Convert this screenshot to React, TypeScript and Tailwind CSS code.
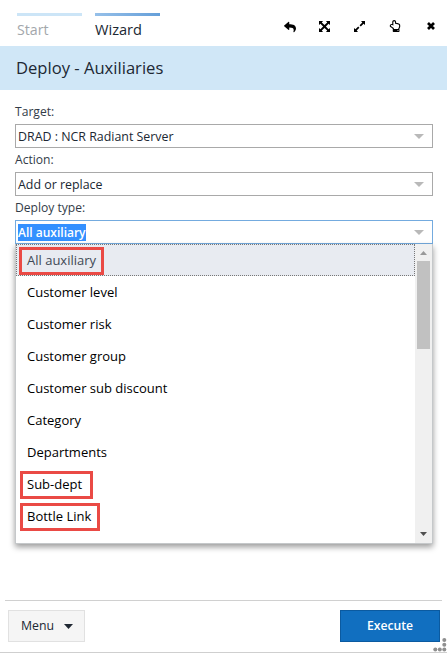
import type { ReactNode } from "react";
import { FaReply, FaRegHandPointUp } from "react-icons/fa";

function Triangle({ className, up = false }: { className: string; up?: boolean }) {
  return (
    <svg className={className} viewBox="0 0 10 5" preserveAspectRatio="none" fill="currentColor">
      <path d={up ? "M0 5h10L5 0z" : "M0 0h10L5 5z"} />
    </svg>
  );
}

function Field({ label, active = false, children }: { label: string; active?: boolean; children: ReactNode }) {
  return (
    <div>
      <div className="h-6 text-[12.1px] leading-6 text-[#333c48]">{label}</div>
      <div
        className={`flex h-6 items-center justify-between border pl-0.5 pr-2 leading-[17px] ${
          active ? "border-[#74abdf] text-[12px] font-semibold" : "border-[#a9a9a9] text-[12.4px] font-medium"
        }`}
      >
        {children}
        <Triangle className="h-[5px] w-2.5 text-[#b9b9b9]" />
      </div>
    </div>
  );
}

const options = [
  "Customer level",
  "Customer risk",
  "Customer group",
  "Customer sub discount",
  "Category",
  "Departments",
  "Sub-dept",
  "Bottle Link",
];

export default function App() {
  return (
    <div className="relative flex h-[653px] w-[447px] flex-col overflow-hidden border-b border-[#cfcfcf] bg-white font-['Open_Sans','Noto_Sans',sans-serif] text-[#202833]">
      <header className="flex h-[46px] shrink-0 justify-between pl-[17px] pr-[11px] pt-[13px]">
        <div className="flex gap-[13px] text-[14.2px] leading-[28px]">
          <div className="w-[65px] border-t-[3px] border-[#cce5f7] text-[#a3a7ab]">Start</div>
          <div className="w-[65px]">
            <div className="h-[3px] bg-linear-to-r from-[#96c0e9] to-[#659fd9]" />
            <div className="text-[14.6px] font-medium leading-[26px]">Wizard</div>
          </div>
        </div>
        <div className="flex items-start pt-1.5 text-black">
          <FaReply className="mr-[23px] mt-0.5 h-3 w-3" />
          <svg className="mr-[24px] mt-[2px] h-[11px] w-[11px]" viewBox="0 0 11 11" fill="currentColor">
            <path d="M0 0h4L2.8 1.4 5.5 4.1 8.2 1.4 7 0h4v4L9.6 2.8 6.9 5.5l2.7 2.7L11 7v4H7l1.2-1.4-2.7-2.7-2.7 2.7L4 11H0V7l1.4 1.2 2.7-2.7-2.7-2.7L0 4z" />
          </svg>
          <svg className="mr-[24px] mt-[2px] h-[11px] w-[11px]" viewBox="0 0 11 11" fill="currentColor">
            <path d="M7 0h4v4L9.6 2.7 6.8 5.4 5.6 4.2 8.3 1.4zM0 11V7l1.4 1.3 2.8-2.7 1.2 1.2-2.7 2.8L4 11z" />
          </svg>
          <FaRegHandPointUp className="mr-[26px] mt-px h-3 w-3" />
          <svg className="mr-px mt-[3px] h-2 w-2" viewBox="0 0 8 8" fill="none" stroke="currentColor" strokeWidth="2.7">
            <path d="M1 1l6 6M7 1L1 7" />
          </svg>
        </div>
      </header>

      <h1 className="h-11 shrink-0 bg-[#d0e7f7] pl-4 text-[16.6px] font-medium leading-[44px]">Deploy - Auxiliaries</h1>

      <main className="flex h-[510px] shrink-0 flex-col pl-[15px] pr-[14px] pt-2.5">
        <Field label="Target:">DRAD : NCR Radiant Server</Field>
        <Field label="Action:">Add or replace</Field>
        <Field label="Deploy type:" active>
          <span className="bg-[#3390ff] text-white">All auxiliary</span>
        </Field>

        <div className="flex h-[300px] shrink-0 border-x border-b border-[#c5c8ca] bg-white text-[13px] text-black shadow-[0_3px_6px_rgba(0,0,0,0.4)]">
          <ul className="w-[399px]">
            <li className="h-8 border border-dotted border-[#777] bg-[#e8ebf1] pl-2.5 leading-[31px] text-[#404955]">
              All auxiliary
            </li>
            {options.map((o) => (
              <li key={o} className="h-8 pl-[11px] leading-8">{o}</li>
            ))}
          </ul>
          <div className="flex w-[17px] flex-col items-center bg-[#f0f0f0]">
            <Triangle up className="mt-[7px] h-1 w-[7px] shrink-0 text-[#999]" />
            <div className="mt-1.5 h-[88px] w-[13px] bg-[#c1c1c1]" />
            <Triangle className="mb-[7px] mt-auto h-1 w-[7px] shrink-0 text-[#505050]" />
          </div>
        </div>
      </main>

      <footer className="mx-[5px] flex shrink-0 justify-between border-t border-[#d0d0d0] pl-[3px] pr-0.5 pt-[9px]">
        <button className="flex h-8 w-[77px] items-center border border-[#e1e1e1] bg-[#f5f5f5] pl-3 text-[12.3px] font-medium">
          Menu
          <Triangle className="ml-2.5 h-[5px] w-[9px] text-[#202833]" />
        </button>
        <button className="h-8 w-[100px] border border-[#0b5aa0] bg-[#116fc0] text-[12.2px] font-semibold text-white">
          Execute
        </button>
      </footer>

      <div className="absolute left-[19px] top-[247px] h-7 w-[85px] border-[3px] border-[#ea4a45]" />
      <div className="absolute left-5 top-[471px] h-7 w-[73px] border-[3px] border-[#ea4a45]" />
      <div className="absolute left-5 top-[503px] h-7 w-[80px] border-[3px] border-[#ea4a45]" />
      <svg className="absolute left-[433px] top-[638px] h-[14px] w-[14px]" viewBox="0 0 14 14" fill="#8f8f8f">
        <circle cx="11.3" cy="2" r="2" />
        <circle cx="11.3" cy="6.7" r="2" />
        <circle cx="2.3" cy="11.6" r="2" />
        <circle cx="6.8" cy="11.6" r="2" />
        <circle cx="11.3" cy="11.6" r="2" />
      </svg>
    </div>
  );
}
